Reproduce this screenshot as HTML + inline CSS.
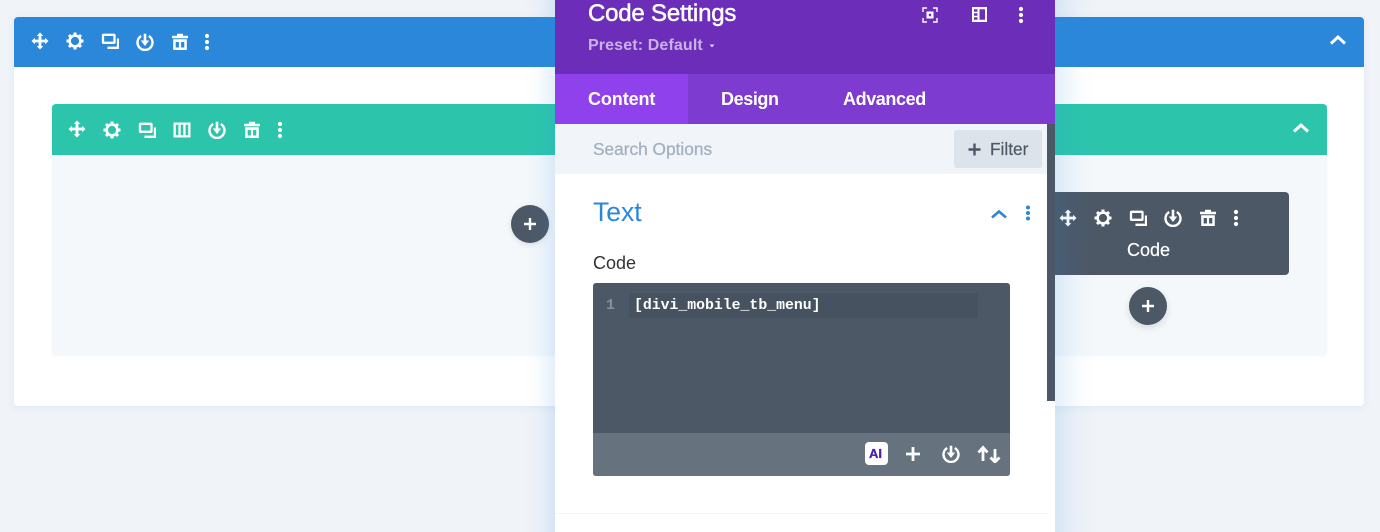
<!DOCTYPE html>
<html><head><meta charset="utf-8"><style>
html,body{margin:0;padding:0}
body{width:1380px;height:532px;overflow:hidden;background:#f0f3f8;position:relative;font-family:"Liberation Sans",sans-serif}
div,span,svg{position:absolute}
.t{white-space:nowrap;line-height:1}
</style></head><body>
<svg width="0" height="0" style="left:0;top:0">
<defs>
<symbol id="move" viewBox="0 0 18 18"><path d="M9 .5 12.300 3.900H10.400V7.600H14.100V5.700L17.500 9 14.100 12.300V10.400H10.400V14.100H12.300L9 17.500 5.700 14.100H7.600V10.400H3.900V12.300L.5 9 3.900 5.700V7.600H7.600V3.900H5.700Z" fill="#fff"/></symbol>
<symbol id="gear" viewBox="0 0 18 18"><circle cx="9" cy="9" r="5.400" fill="none" stroke="#fff" stroke-width="2.600"/><path d="M9 .5V3.500M9 14.500V17.500M.5 9H3.500M14.500 9H17.500M3 3 5.100 5.100M12.900 12.900 15 15M15 3 12.900 5.100M5.100 12.900 3 15" stroke="#fff" stroke-width="3"/></symbol>
<symbol id="copy" viewBox="0 0 18 18"><rect x="2" y="2.800" width="11.500" height="8" rx=".6" fill="none" stroke="#fff" stroke-width="2.300"/><path d="M17 6.500V15.800H6.500" fill="none" stroke="#fff" stroke-width="2.300"/></symbol>
<symbol id="cols" viewBox="0 0 18 18"><path d="M.5 1.500H17.500V16.500H.5ZM2.800 3.800V14.200H5.400V3.800ZM7.700 3.800V14.200H10.300V3.800ZM12.600 3.800V14.200H15.200V3.800Z" fill="#fff" fill-rule="evenodd"/></symbol>
<symbol id="power" viewBox="0 0 18 18"><path d="M5.200 3A7.500 7.500 0 1 0 12.800 3" fill="none" stroke="#fff" stroke-width="2.400"/><path d="M7.700 .8H10.300V7.500H13.200L9 13 4.800 7.500H7.700Z" fill="#fff"/></symbol>
<symbol id="trash" viewBox="0 0 18 18"><path d="M6 .8H12V2.800H17V5.200H1V2.800H6ZM2.200 6.300H15.800V17H2.200ZM4.700 9V14.500H7.900V9ZM10.100 9V14.500H13.300V9Z" fill="#fff" fill-rule="evenodd"/></symbol>
<symbol id="dots" viewBox="0 0 18 18"><circle cx="9" cy="3" r="2.100" fill="#fff"/><circle cx="9" cy="9" r="2.100" fill="#fff"/><circle cx="9" cy="15" r="2.100" fill="#fff"/></symbol>
<symbol id="up" viewBox="0 0 18 18"><path d="M2 12.500 9 6 16 12.500" fill="none" stroke="#fff" stroke-width="3"/></symbol>
</defs>
</svg>

<!-- section -->
<div style="left:14px;top:17px;width:1350px;height:389px;background:#fff;border-radius:4px;box-shadow:0 2px 8px rgba(43,135,218,.08)"></div>
<div style="left:14px;top:17px;width:1350px;height:50px;background:#2b87da;border-radius:4px 4px 0 0"></div>
<svg style="left:31px;top:32px" width="18" height="18"><use href="#move"/></svg>
<svg style="left:66px;top:32px" width="18" height="18"><use href="#gear"/></svg>
<svg style="left:101px;top:32px" width="18" height="18"><use href="#copy"/></svg>
<svg style="left:136px;top:33px" width="18" height="18"><use href="#power"/></svg>
<svg style="left:171px;top:33px" width="18" height="18"><use href="#trash"/></svg>
<svg style="left:198px;top:33px" width="18" height="18"><use href="#dots"/></svg>
<svg style="left:1329px;top:31px" width="18" height="18"><use href="#up"/></svg>

<!-- row -->
<div style="left:52px;top:104px;width:1275px;height:251px;background:#f4f8fb;border-radius:4px;box-shadow:0 1px 2px rgba(43,135,218,.07)"></div>
<div style="left:52px;top:104px;width:1275px;height:51px;background:#2cc5ab;border-radius:4px 4px 0 0"></div>
<svg style="left:68px;top:120px" width="18" height="18"><use href="#move"/></svg>
<svg style="left:103px;top:121px" width="18" height="18"><use href="#gear"/></svg>
<svg style="left:138px;top:121px" width="18" height="18"><use href="#copy"/></svg>
<svg style="left:173px;top:121px" width="18" height="18"><use href="#cols"/></svg>
<svg style="left:208px;top:121px" width="18" height="18"><use href="#power"/></svg>
<svg style="left:243px;top:121px" width="18" height="18"><use href="#trash"/></svg>
<svg style="left:271px;top:121px" width="18" height="18"><use href="#dots"/></svg>
<svg style="left:1292px;top:119px" width="18" height="18"><use href="#up"/></svg>

<!-- add button left -->
<div style="left:511px;top:205px;width:38px;height:38px;border-radius:50%;background:#4c5866;box-shadow:0 2px 6px rgba(0,0,0,.1)"></div>
<svg style="left:511px;top:205px" width="38" height="38"><path d="M19 13V25M13 19H25" stroke="#fff" stroke-width="2.400"/></svg>

<!-- module -->
<div style="left:1000px;top:192px;width:289px;height:83px;background:#4c5866;border-radius:4px"></div>
<svg style="left:1059px;top:209px" width="18" height="18"><use href="#move"/></svg>
<svg style="left:1094px;top:209px" width="18" height="18"><use href="#gear"/></svg>
<svg style="left:1129px;top:209px" width="18" height="18"><use href="#copy"/></svg>
<svg style="left:1164px;top:209px" width="18" height="18"><use href="#power"/></svg>
<svg style="left:1199px;top:209px" width="18" height="18"><use href="#trash"/></svg>
<svg style="left:1227px;top:209px" width="18" height="18"><use href="#dots"/></svg>
<div class="t" style="left:1127px;top:241px;font-size:18px;color:#fff;-webkit-text-stroke:.2px #fff">Code</div>
<div style="left:1129px;top:287px;width:38px;height:38px;border-radius:50%;background:#4c5866;box-shadow:0 3px 8px rgba(0,0,0,.12)"></div>
<svg style="left:1129px;top:287px" width="38" height="38"><path d="M19 13V25M13 19H25" stroke="#fff" stroke-width="2.400"/></svg>

<!-- panel shadow -->
<div style="left:525px;top:0;width:30px;height:532px;background:linear-gradient(to left,rgba(43,135,218,.13),rgba(43,135,218,.03) 55%,rgba(43,135,218,0))"></div>
<div style="left:1055px;top:0;width:40px;height:532px;background:linear-gradient(to right,rgba(43,135,218,.13),rgba(43,135,218,.03) 55%,rgba(43,135,218,0))"></div>

<!-- panel -->
<div style="left:555px;top:0;width:500px;height:532px;background:#fff"></div>
<div style="left:555px;top:0;width:500px;height:74px;background:#6c2eb9"></div>
<div style="left:555px;top:74px;width:500px;height:50px;background:#7e3bd0"></div>
<div style="left:555px;top:74px;width:133px;height:50px;background:#8f42ec"></div>
<div class="t" style="left:588px;top:2px;font-size:24px;font-weight:400;color:#fff;-webkit-text-stroke:.5px #fff;letter-spacing:-.2px">Code Settings</div>
<div class="t" style="left:588px;top:38px;font-size:16px;font-weight:700;color:#c9b2e6;letter-spacing:.13px">Preset: Default</div>
<svg style="left:708px;top:43px" width="8" height="6"><path d="M1.500 1.500H6.500L4 4.500Z" fill="#d9c8ee"/></svg>
<svg style="left:921px;top:6px" width="18" height="18"><path d="M2 6V2H6M12 2H16V6M16 12V16H12M6 16H2V12" fill="none" stroke="#fff" stroke-width="1.400"/><path d="M5.500 5.500H12.500V12.500H5.500ZM7.800 7.800V10.200H10.200V7.800Z" fill="#fff" fill-rule="evenodd"/></svg>
<svg style="left:971px;top:6px" width="18" height="18"><path d="M1 1H16V16H1ZM3 3.300V5.800H6.500V3.300ZM3 7.300V9.800H6.500V7.300ZM3 11.300V13.800H6.500V11.300ZM8.500 3.300V13.800H14V3.300Z" fill="#fff" fill-rule="evenodd"/></svg>
<svg style="left:1012px;top:6px" width="18" height="18"><use href="#dots"/></svg>
<div class="t" style="left:588px;top:90px;font-size:18px;font-weight:700;color:#fff;letter-spacing:-.1px">Content</div>
<div class="t" style="left:721px;top:90px;font-size:18px;font-weight:700;color:#fff;letter-spacing:-.4px">Design</div>
<div class="t" style="left:843px;top:90px;font-size:18px;font-weight:700;color:#fff;letter-spacing:-.4px">Advanced</div>

<div style="left:555px;top:124px;width:492px;height:50px;background:#f1f5f9"></div>
<div class="t" style="left:593px;top:141px;font-size:17.300px;font-weight:400;color:#a3b0c0;-webkit-text-stroke:.3px #a3b0c0">Search Options</div>
<div style="left:954px;top:130px;width:88px;height:38px;background:#dde3ea;border-radius:3px"></div>
<svg style="left:967px;top:142px" width="15" height="15"><path d="M7.500 1.500V13.500M1.500 7.500H13.500" stroke="#4c5866" stroke-width="2.400"/></svg>
<div class="t" style="left:990px;top:141px;font-size:17.300px;color:#4c5866;-webkit-text-stroke:.2px #4c5866">Filter</div>
<div style="left:1047px;top:124px;width:8px;height:277px;background:#4c5866"></div>

<div class="t" style="left:593px;top:199px;font-size:26.500px;color:#2b87da">Text</div>
<svg style="left:990px;top:205px" width="18" height="18"><path d="M2 12.500 9 6.500 16 12.500" fill="none" stroke="#2b87da" stroke-width="2.600"/></svg>
<svg style="left:1019px;top:204px" width="18" height="18"><circle cx="9" cy="3.500" r="2" fill="#2b87da"/><circle cx="9" cy="9" r="2" fill="#2b87da"/><circle cx="9" cy="14.500" r="2" fill="#2b87da"/></svg>
<div class="t" style="left:593px;top:254px;font-size:18px;color:#333">Code</div>

<div style="left:593px;top:283px;width:417px;height:193px;background:#4c5866;border-radius:3px;overflow:hidden">
  <div style="left:0;top:150px;width:417px;height:43px;background:#66727e"></div>
  <div style="left:36px;top:10px;width:349px;height:25px;background:#465260"></div>
</div>
<div class="t" style="left:606px;top:299px;font-size:14.800px;font-weight:700;font-family:'Liberation Mono',monospace;color:#8591a0">1</div>
<div class="t" style="left:634px;top:299px;font-size:14.800px;font-weight:700;font-family:'Liberation Mono',monospace;color:#fff">[divi_mobile_tb_menu]</div>
<div style="left:865px;top:442px;width:23px;height:23px;background:#fff;border-radius:4px"></div>
<div class="t" style="left:869px;top:447px;font-size:13px;font-weight:700;color:#4c1fb0;-webkit-text-stroke:.3px #4c1fb0">AI</div>
<svg style="left:904px;top:445px" width="18" height="18"><path d="M9 2V16M2 9H16" stroke="#fff" stroke-width="2.800"/></svg>
<svg style="left:942px;top:445px" width="18" height="18"><use href="#power"/></svg>
<svg style="left:976px;top:445px" width="26" height="18"><path d="M7 16V3M2.500 7.500 7 2.500 11.500 7.500M19 4V17M14.500 12.500 19 17 23.500 12.500" fill="none" stroke="#fff" stroke-width="2.800"/></svg>
<div style="left:555px;top:513px;width:492px;height:1px;background:#f1f3f6"></div>
</body></html>
